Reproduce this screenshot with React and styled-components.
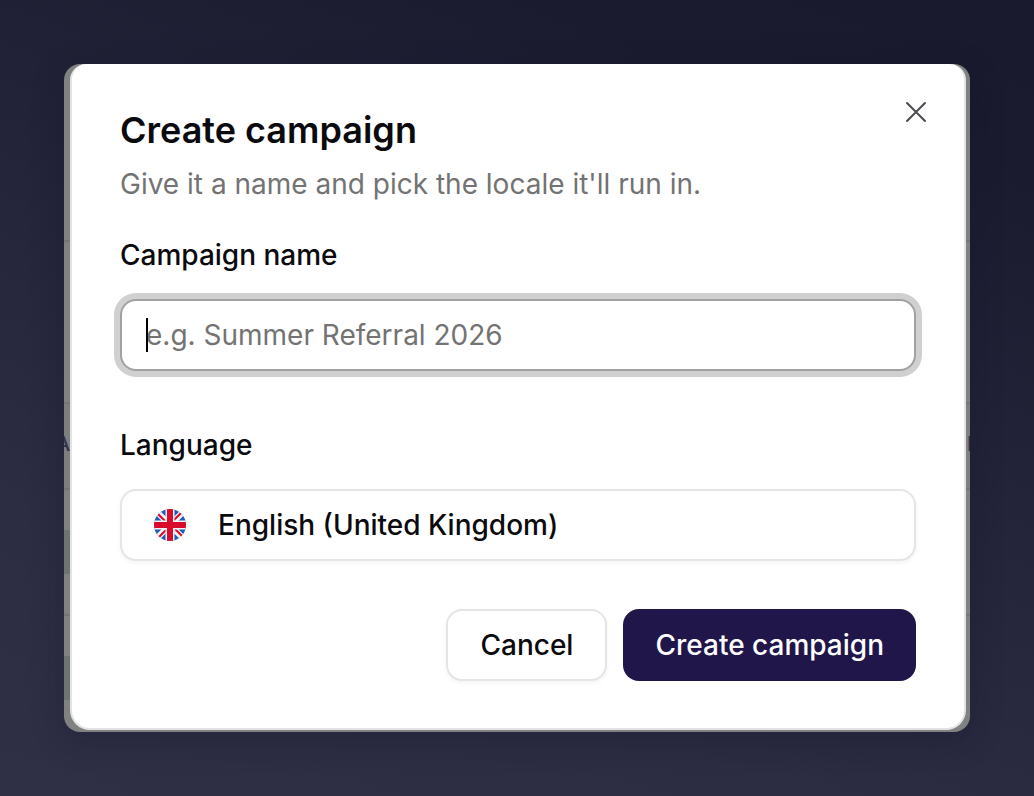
import React, { useState } from 'react';
import styled, { createGlobalStyle } from 'styled-components';

const GlobalStyle = createGlobalStyle`
  * {
    box-sizing: border-box;
  }

  body {
    margin: 0;
    background: #1f1f36;
    color: #0a0a0f;
    font-family: Inter, 'Liberation Sans', sans-serif;
    font-size: 28px;
    line-height: 40px;
  }

  button, input, select {
    font: inherit;
    color: inherit;
  }
`;

const Page = styled.main`
  min-height: 100vh;
  padding: 64px;
  background: linear-gradient(20deg, #2f2f46 0%, #2c2c43 25%, #1b1b30 85%, #1a1a2e 100%);
`;

const Window = styled.div`
  position: relative;
  overflow: hidden;
  padding: 0 4px 2px 6px;
  border-radius: 16px;
  background: #7f8280;
  box-shadow: 0 8px 32px rgba(16, 16, 40, 0.3);
`;

// Dimmed campaigns table that shows at both edges of the dialog
const Behind = styled.div`
  position: absolute;
  inset: 0;
  padding-top: 176px;
  color: #34314f;
  font-size: 20px;
  font-weight: 500;
`;

const BehindRow = styled.div`
  display: flex;
  align-items: center;
  justify-content: space-between;
  height: ${({ $height }) => $height}px;
  padding-bottom: ${({ $header }) => ($header ? 4 : 0)}px;
  border-top: 2px solid #747775;
  background: ${({ $header }) => ($header ? '#7c7f7d' : 'transparent')};
`;

const BehindText = styled.span`
  margin: ${({ $end }) => ($end ? '0 -9px 0 0' : '0 0 0 -8px')};
`;

const BehindThumb = styled.span`
  width: 40px;
  height: 44px;
  background: #6f7371;
`;

const Dialog = styled.section`
  position: relative;
  padding: 44px 48px 47px;
  border: 2px solid #e3e3e3;
  border-top: 0;
  border-radius: 16px 16px 20px 20px;
  background: #fff;
`;

const CloseButton = styled.button`
  position: absolute;
  top: 32px;
  right: 32px;
  display: flex;
  padding: 0;
  border: 0;
  background: none;
  color: #4b4b50;
  cursor: pointer;
`;

const Title = styled.h1`
  margin: 0;
  font-size: 36px;
  font-weight: 600;
  line-height: 44px;
`;

const Description = styled.p`
  margin: 12px 0 0;
  color: #737373;
`;

const Field = styled.div`
  display: flex;
  flex-direction: column;
  gap: 24px;
  margin-top: ${({ $spacing }) => $spacing}px;
`;

const Label = styled.label`
  font-weight: 500;
`;

const Control = styled.div`
  position: relative;
  display: flex;
  align-items: center;
`;

const TextInput = styled.input`
  width: 100%;
  height: 72px;
  padding: 0 24px;
  border: 2px solid #a1a1a1;
  border-radius: 16px;
  outline: 0;
  background: #fff;
  box-shadow: 0 0 0 6px #d0d0d0;
  caret-color: transparent;

  &::placeholder {
    color: #737373;
    opacity: 1;
  }
`;

const Caret = styled.span`
  position: absolute;
  left: 26px;
  width: 2px;
  height: 34px;
  background: #000;
`;

const Select = styled.select`
  width: 100%;
  height: 72px;
  padding: 0 24px 0 96px;
  border: 2px solid #e5e5e5;
  border-radius: 16px;
  appearance: none;
  background: #fff;
  box-shadow: 0 2px 4px rgba(0, 0, 0, 0.05);
  font-weight: 500;
`;

const FlagIcon = styled.svg`
  position: absolute;
  left: 34px;
  width: 32px;
  height: 32px;
  pointer-events: none;
`;

const Actions = styled.div`
  display: flex;
  justify-content: flex-end;
  gap: 16px;
  margin-top: 48px;
`;

const Button = styled.button`
  height: 72px;
  padding: 0 32px;
  border: ${({ $primary }) => ($primary ? '0' : '2px solid #e5e5e5')};
  border-radius: 16px;
  background: ${({ $primary }) => ($primary ? '#21164a' : '#fff')};
  color: ${({ $primary }) => ($primary ? '#fff' : '#0a0a0f')};
  box-shadow: ${({ $primary }) => ($primary ? 'none' : '0 2px 4px rgba(0, 0, 0, 0.05)')};
  font-weight: 500;
  cursor: pointer;
`;

const UnitedKingdomFlag = () => (
  <FlagIcon viewBox="0 0 32 32" aria-hidden="true">
    <defs>
      <clipPath id="flag-circle">
        <circle cx="16" cy="16" r="16" />
      </clipPath>
    </defs>
    <g clipPath="url(#flag-circle)">
      <path fill="#1d5db5" d="M0 0h32v32H0z" />
      <path stroke="#f4f4f4" strokeWidth="6" d="M0 0l32 32M32 0L0 32" />
      <path stroke="#d80b2c" strokeWidth="2" d="M0 1l14 14M32 -1L18 13M32 31L18 17M0 33l14-14" />
      <path stroke="#f4f4f4" strokeWidth="9" d="M16 0v32M0 16h32" />
      <path stroke="#d80b2c" strokeWidth="6" d="M16 0v32M0 16h32" />
    </g>
  </FlagIcon>
);

const CloseIcon = () => (
  <svg width="32" height="32" viewBox="0 0 32 32" fill="none" stroke="currentColor" strokeWidth="2" strokeLinecap="round">
    <path d="M7 7l18 18M25 7L7 25" />
  </svg>
);

const App = () => {
  const [name, setName] = useState('');
  const [language, setLanguage] = useState('en-GB');

  return (
    <>
      <GlobalStyle />
      <Page>
        <Window>
          <Behind aria-hidden="true">
            <BehindRow $height={162} />
            <BehindRow $height={86} $header>
              <BehindText>A</BehindText>
              <BehindText $end>E</BehindText>
            </BehindRow>
            <BehindRow $height={126}>
              <BehindThumb />
            </BehindRow>
            <BehindRow $height={126}>
              <BehindThumb />
            </BehindRow>
          </Behind>
          <Dialog role="dialog" aria-labelledby="dialog-title">
            <CloseButton type="button" aria-label="Close">
              <CloseIcon />
            </CloseButton>
            <Title id="dialog-title">Create campaign</Title>
            <Description>Give it a name and pick the locale it'll run in.</Description>
            <Field $spacing={31}>
              <Label htmlFor="campaign-name">Campaign name</Label>
              <Control>
                <TextInput
                  id="campaign-name"
                  placeholder="e.g. Summer Referral 2026"
                  value={name}
                  onChange={(e) => setName(e.target.value)}
                />
                {!name && <Caret />}
              </Control>
            </Field>
            <Field $spacing={54}>
              <Label htmlFor="language">Language</Label>
              <Control>
                <Select id="language" value={language} onChange={(e) => setLanguage(e.target.value)}>
                  <option value="en-GB">English (United Kingdom)</option>
                </Select>
                <UnitedKingdomFlag />
              </Control>
            </Field>
            <Actions>
              <Button type="button">Cancel</Button>
              <Button type="button" $primary>Create campaign</Button>
            </Actions>
          </Dialog>
        </Window>
      </Page>
    </>
  );
};

export default App;
